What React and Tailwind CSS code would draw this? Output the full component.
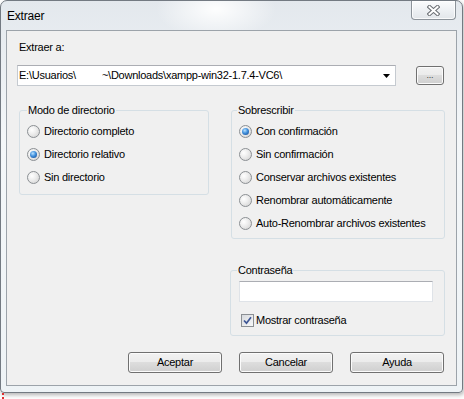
import React from "react";

function Radio({ checked }) {
  return (
    <span className="flex w-[13px] h-[13px] shrink-0 items-center justify-center rounded-full border border-[#8b8f93] bg-[radial-gradient(circle_at_35%_35%,#ffffff_0%,#eeeeee_40%,#cfcfcf_100%)]">
      {checked && (
        <span className="block w-[7px] h-[7px] rounded-full bg-[radial-gradient(circle_at_40%_35%,#b9e1ff_0%,#3f8fdc_45%,#133f86_100%)]" />
      )}
    </span>
  );
}

function RadioRow({ label, checked }) {
  return (
    <div className="flex h-[23px] items-center gap-[4px]">
      <Radio checked={checked} />
      <span className="leading-[13px]">{label}</span>
    </div>
  );
}

function Btn({ children }) {
  return (
    <button className="w-[94px] h-[21px] rounded-[3px] border border-[#707070] bg-[linear-gradient(#f2f2f2_0%,#ebebeb_50%,#dddddd_50%,#cfcfcf_100%)] shadow-[inset_0_0_0_1px_#fbfbfb] text-[11px] leading-[13px] tracking-[-0.25px] text-black">
      {children}
    </button>
  );
}

export default function App() {
  return (
    <div className="w-[464px] h-[399px] bg-white font-['Liberation_Sans',Arial,sans-serif] text-[11px] tracking-[-0.25px] text-black overflow-hidden">
      <div className="w-[463px] h-[393px] border border-[#737a82] rounded-t-[7px] rounded-b-[4px] bg-[linear-gradient(to_bottom,#e3e8ed_0%,#f4f7f9_35%,#eef3f6_100%)] shadow-[1px_2px_4px_rgba(0,0,0,0.3)] flex flex-col">
        {/* title bar */}
        <div className="h-[29px] flex items-start bg-[radial-gradient(ellipse_60px_30px_at_215px_8px,rgba(255,255,255,0.95),rgba(255,255,255,0))]">
          <span className="ml-[6px] mt-[8px] text-[12px] leading-[15px] tracking-[-0.2px]">Extraer</span>
          <div className="ml-auto mr-[6px] w-[45px] h-[19px] rounded-b-[4px] border border-t-0 border-[#8c939a] bg-[linear-gradient(#fbfcfd_0%,#eef1f4_50%,#e2e6ea_100%)] shadow-[inset_0_0_0_1px_rgba(255,255,255,0.8)] flex items-center justify-center">
            <svg width="13" height="11" viewBox="0 0 13 11">
              <path d="M2.5 2 L10.5 9 M10.5 2 L2.5 9" stroke="#6a6e73" strokeWidth="4" strokeLinecap="square" fill="none" />
              <path d="M2.5 2 L10.5 9 M10.5 2 L2.5 9" stroke="#ffffff" strokeWidth="2" strokeLinecap="square" fill="none" />
            </svg>
          </div>
        </div>

        {/* client area */}
        <div className="mx-[5px] h-[356px] border border-[#9ca3aa] bg-[#f0f0f0] flex flex-col pt-[10px]">
          <div className="ml-[12px] h-[13px] leading-[13px]">Extraer a:</div>

          <div className="mt-[11px] flex items-start">
            <div className="ml-[10px] w-[379px] h-[21px] border border-[#c5cad0] border-t-[#abadb3] bg-white flex items-center pl-[1px] pr-[5px]">
              <span className="leading-[13px] whitespace-pre">{"E:\\Usuarios\\"}</span>
              <span className="w-[26px]" />
              <span className="leading-[13px] whitespace-pre">{"~\\Downloads\\xampp-win32-1.7.4-VC6\\"}</span>
              <svg className="ml-auto" width="7" height="4" viewBox="0 0 7 4">
                <path d="M0 0 H7 L3.5 4 Z" fill="#000" />
              </svg>
            </div>
            <button className="ml-[20px] mt-[1px] w-[28px] h-[19px] rounded-[3px] border border-[#707070] bg-[linear-gradient(#f2f2f2_0%,#ebebeb_50%,#dddddd_50%,#cfcfcf_100%)] shadow-[inset_0_0_0_1px_#fbfbfb] text-[9px] leading-[9px] text-[#444] flex items-center justify-center">
              ...
            </button>
          </div>

          <div className="mt-[18px] flex items-start">
            <fieldset className="ml-[12px] w-[190px] h-[91px] border border-[#d5dfe5] rounded-[3px] pl-[7px] pt-[3px]">
              <legend className="px-[1px] leading-[13px]">Modo de directorio</legend>
              <RadioRow label="Directorio completo" />
              <RadioRow label="Directorio relativo" checked />
              <RadioRow label="Sin directorio" />
            </fieldset>

            <div className="ml-[22px] flex flex-col">
              <fieldset className="w-[214px] h-[135px] border border-[#d5dfe5] rounded-[3px] pl-[7px] pt-[3px]">
                <legend className="ml-[-2px] px-[1px] leading-[13px]">Sobrescribir</legend>
                <RadioRow label="Con confirmación" checked />
                <RadioRow label="Sin confirmación" />
                <RadioRow label="Conservar archivos existentes" />
                <RadioRow label="Renombrar automáticamente" />
                <RadioRow label="Auto-Renombrar archivos existentes" />
              </fieldset>

              <fieldset className="mt-[25px] ml-[-1px] w-[215px] h-[72px] border border-[#d5dfe5] rounded-[3px] pl-[8px]">
                <legend className="ml-[-2px] px-[1px] leading-[13px]">Contraseña</legend>
                <div className="mt-[4px] w-[194px] h-[21px] border border-[#dfe3e8] border-t-[#abadb3] bg-white" />
                <div className="mt-[12px] ml-[2px] flex h-[13px] items-center gap-[2px]">
                  <span className="flex w-[13px] h-[13px] items-center justify-center border border-[#8b8f93] bg-[linear-gradient(135deg,#d6d9dd,#f7f8f9)]">
                    <svg width="9" height="9" viewBox="0 0 9 9">
                      <path d="M1 4.5 L3.5 7.2 L8 1.2" stroke="#3e5695" strokeWidth="1.7" fill="none" />
                    </svg>
                  </span>
                  <span className="leading-[13px]">Mostrar contraseña</span>
                </div>
              </fieldset>
            </div>
          </div>

          <div className="mt-[16px] flex justify-end gap-[17px] pr-[12px]">
            <Btn>Aceptar</Btn>
            <Btn>Cancelar</Btn>
            <Btn>Ayuda</Btn>
          </div>
        </div>
      </div>
      <div className="ml-[2px] h-[6px] w-0 border-l-2 border-dotted border-[#e03030]" />
    </div>
  );
}
